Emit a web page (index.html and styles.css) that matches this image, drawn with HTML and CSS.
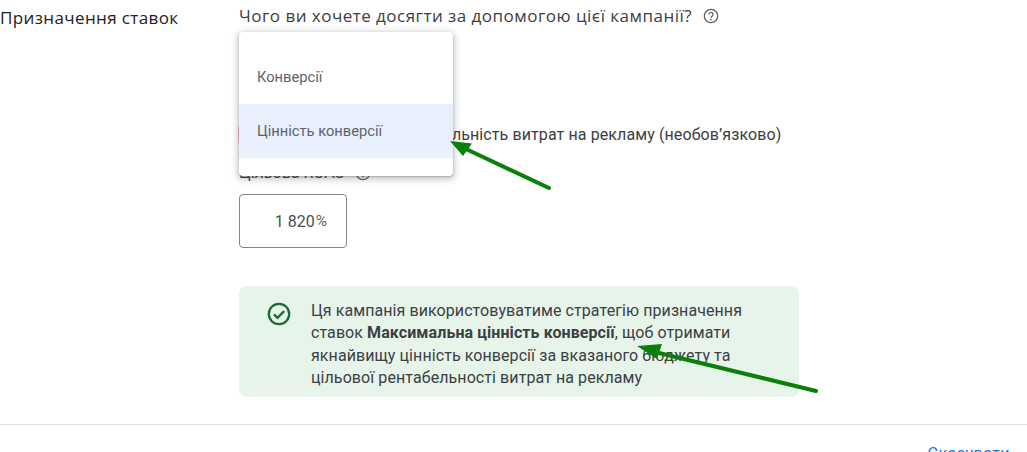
FILE: index.html
```html
<!DOCTYPE html>
<html lang="uk">
<head>
<meta charset="utf-8">
<title>Призначення ставок</title>
<link rel="stylesheet" href="styles.css">
</head>
<body>
<div class="page">
  <section class="row">
    <h2 class="row-label">Призначення ставок</h2>
    <div class="row-body">
      <div class="question">
        <span>Чого ви хочете досягти за допомогою цієї кампанії?</span>
        <svg class="help help-top" viewBox="0 0 16 16"><circle cx="8" cy="8" r="6.7"/><path d="M6 6.4a2 2 0 1 1 3.1 1.7c-.7.45-1.1.8-1.1 1.6"/><circle class="dot" cx="8" cy="11.6" r=".9"/></svg>
      </div>
      <div class="roas-check">
        <span class="checkbox"></span>
        <span>Задати цільову рентабельність витрат на рекламу (необов’язково)</span>
      </div>
      <div class="roas-label">
        <span>Цільова ROAS</span>
        <svg class="help" viewBox="0 0 16 16"><circle cx="8" cy="8" r="6.7"/><path d="M6 6.4a2 2 0 1 1 3.1 1.7c-.7.45-1.1.8-1.1 1.6"/><circle class="dot" cx="8" cy="11.6" r=".9"/></svg>
      </div>
      <div class="roas-input"><span>1 820</span><span class="pct">%</span></div>
      <div class="notice">
        <svg class="notice-icon" viewBox="0 0 24 24"><circle cx="12" cy="12" r="10.200"/><path d="M7 12.400l3.500 3.500 6.600-6.800"/></svg>
        <p>Ця кампанія використовуватиме стратегію призначення ставок <b>Максимальна цінність конверсії</b>, щоб отримати якнайвищу цінність конверсії за вказаного бюджету та цільової рентабельності витрат на рекламу</p>
      </div>
    </div>
    <ul class="menu">
      <li class="menu-item">Конверсії</li>
      <li class="menu-item is-active">Цінність конверсії</li>
    </ul>
  </section>
  <footer class="footer"><a class="cancel">Скасувати</a></footer>
  <svg class="arrows" viewBox="0 0 1027 452">
    <path class="shaft" d="M549 188L466 149"/>
    <path class="head" d="M450 141L472 143.500L463 156Z"/>
    <path class="shaft" d="M816 391L655 352"/>
    <path class="head" d="M637 346L662 344L657 359Z"/>
  </svg>
</div>
</body>
</html>
```
FILE: styles.css
```css
* { box-sizing: border-box; }
html, body { margin: 0; padding: 0; background: #fff; }
body { width: 1027px; height: 452px; overflow: hidden; font-family: Roboto, sans-serif; color: #3c4043; }
.page { position: relative; width: 1027px; height: 452px; overflow: hidden; }
.row { display: flex; position: relative; height: 425px; border-bottom: 1px solid #e0e0e0; }
.row-label { margin: 0; padding-top: 8px; width: 239px; flex: none; font: 400 17px/20px "Open Sans", sans-serif; letter-spacing: .38px; color: #202124; }
.row-body { flex: none; width: 560px; display: flex; flex-direction: column; }
.question { display: flex; align-items: center; gap: 11px; padding-top: 5px; height: 26px; font: 400 17px/20px "Open Sans", sans-serif; letter-spacing: .48px; color: #3c4043; }
.help { width: 16px; height: 16px; fill: none; stroke: #5f6368; stroke-width: 1.3; flex: none; }
.help .dot { fill: #5f6368; stroke: none; }
.roas-check { display: flex; align-items: center; gap: 15px; margin-top: 99px; margin-left: -1px; height: 20px; font-size: 16px; line-height: 20px; letter-spacing: .1px; white-space: nowrap; }
.checkbox { width: 18px; height: 18px; background: #f2b8c0; border-radius: 2px; flex: none; }
.roas-label { display: flex; align-items: center; gap: 11px; margin-top: 17px; height: 21px; font-size: 16px; }
.roas-input { margin-top: 11px; width: 108px; height: 54px; border: 1px solid #80868b; border-radius: 4px; display: flex; align-items: center; justify-content: flex-end; padding-right: 19px; font-size: 16px; color: #4a4f54; }
.pct { margin-left: 1px; font-size: 15.500px; color: #5f6368; }
.notice { margin-top: 38px; width: 560px; height: 111px; background: #e6f4ea; border-radius: 8px; display: flex; padding: 14px 40px 0 28px; gap: 20px; }
.notice-icon { width: 24px; height: 24px; flex: none; margin-top: 2px; fill: none; stroke: #1b6b3a; stroke-width: 2.300; }
.notice p { margin: 0; font-size: 16px; line-height: 22.400px; letter-spacing: .08px; color: #3c4043; }
.notice b { font-weight: 700; }
.menu { position: absolute; left: 239px; top: 32px; width: 214px; height: 144px; margin: 0; padding: 18px 0 0; list-style: none; background: #fff; border-radius: 4px; box-shadow: 0 2px 6px 2px rgba(60,64,67,.25), 0 1px 2px rgba(60,64,67,.3); }
.menu-item { height: 54px; padding: 0 18px; display: flex; align-items: center; font-size: 14.700px; color: #5f6368; }
.is-active { background: #e8f0fe; }
.footer { display: flex; justify-content: flex-end; padding: 19px 17px 0 0; }
.cancel { font-size: 16px; line-height: 20px; letter-spacing: .45px; color: #1a73e8; }
.arrows { position: absolute; left: 0; top: 0; width: 1027px; height: 452px; pointer-events: none; }
.shaft { stroke: #0a800a; stroke-width: 4; stroke-linecap: round; fill: none; }
.head { fill: #0a800a; }
```
